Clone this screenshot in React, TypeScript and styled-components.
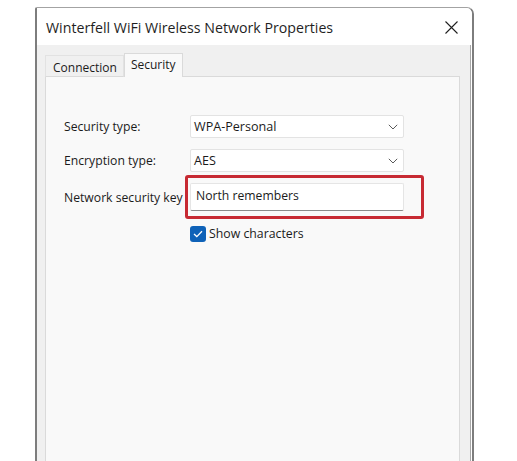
import React from "react";
import styled, { createGlobalStyle } from "styled-components";

const GlobalStyle = createGlobalStyle`
  html, body { margin: 0; padding: 0; background: #ffffff; }
  body { font-family: "Open Sans", "Noto Sans", sans-serif; color: #1b1b1b; }
`;

const Page = styled.div`
  width: 517px;
  height: 461px;
  overflow: hidden;
  padding: 7px 0 0 35px;
  box-sizing: border-box;
`;

const Window = styled.div`
  width: 439px;
  height: 470px;
  box-sizing: border-box;
  background: #ffffff;
  border-left: 2px solid #7d7d7d;
  border-right: 2px solid #7d7d7d;
  border-top: 1px solid #a3a3a3;
  border-top-right-radius: 7px;
  border-top-left-radius: 2px;
  display: flex;
  flex-direction: column;
`;

const TitleBar = styled.div`
  height: 37px;
  display: flex;
  align-items: center;
  justify-content: space-between;
  padding: 0 14px 0 9px;
  background: #ffffff;
  border-top-right-radius: 6px;
`;

const Title = styled.div`
  font-size: 14.2px;
  color: #1f1f1f;
  white-space: nowrap;
  margin-top: 1px;
`;

const CloseButton = styled.div`
  width: 14px;
  height: 14px;
  display: flex;
  align-items: center;
  justify-content: center;
  margin-top: 1px;
`;

const Body = styled.div`
  flex: 1;
  background: #f0f0f0;
  margin-right: 1px;
  border-right: 1px solid #a9a9a9;
  padding: 0 10px 0 8px;
  display: flex;
  flex-direction: column;
`;

const TabStrip = styled.div`
  display: flex;
  align-items: flex-end;
  height: 32px;
  margin-bottom: -1px;
  position: relative;
  z-index: 1;
`;

const Tab = styled.div<{ $active?: boolean }>`
  font-size: 12px;
  height: ${(p) => (p.$active ? 24 : 22)}px;
  box-sizing: border-box;
  display: flex;
  align-items: ${(p) => (p.$active ? "flex-start" : "center")};
  padding: ${(p) => (p.$active ? "2px 6px 0 6px" : "2px 6px 0 7px")};
  background: ${(p) => (p.$active ? "#f9f9f9" : "#f0f0f0")};
  border: 1px solid ${(p) => (p.$active ? "#dadada" : "#e2e2e2")};
  border-bottom: ${(p) => (p.$active ? "none" : "1px solid #dadada")};
  color: #1b1b1b;
`;

const Panel = styled.div`
  flex: 1;
  background: #f9f9f9;
  border: 1px solid #dadada;
  border-bottom: none;
  padding: 38px 0 0 18px;
`;

const Form = styled.div`
  display: grid;
  grid-template-columns: 126px 214px;
  row-gap: 11px;
  align-items: center;
`;

const Label = styled.div`
  font-size: 12.2px;
  color: #1b1b1b;
  white-space: nowrap;
`;

const Select = styled.div`
  height: 23px;
  box-sizing: border-box;
  background: #ffffff;
  border: 1px solid #e3e3e3;
  border-radius: 2px;
  display: flex;
  align-items: center;
  justify-content: space-between;
  padding: 0 5px 0 3px;
  font-size: 12.6px;
  color: #1b1b1b;
`;

const InputWrap = styled.div`
  position: relative;
`;

const Input = styled.div`
  height: 28px;
  box-sizing: border-box;
  background: #ffffff;
  border: 1px solid #e5e5e5;
  border-bottom: 1px solid #8a8a8a;
  border-radius: 2px;
  display: flex;
  align-items: center;
  padding: 0 0 4px 5px;
  font-size: 12.2px;
  color: #1b1b1b;
`;

const Highlight = styled.div`
  position: absolute;
  left: -5px;
  right: -20px;
  top: -8px;
  bottom: -8px;
  border: 3px solid #c72a33;
  border-radius: 3px;
  pointer-events: none;
`;

const CheckRow = styled.label`
  grid-column: 2;
  display: flex;
  align-items: center;
  gap: 3px;
  margin-top: 3px;
  font-size: 12.3px;
  color: #1b1b1b;
`;

const Checkbox = styled.div`
  width: 16px;
  height: 16px;
  border-radius: 3px;
  background: #0f62b8;
  display: flex;
  align-items: center;
  justify-content: center;
`;

const Chevron = () => (
  <svg width="10" height="6" viewBox="0 0 10 6">
    <path d="M0.8 0.8 L5 5 L9.2 0.8" fill="none" stroke="#5a5a5a" strokeWidth="1" />
  </svg>
);

export default function App() {
  return (
    <Page>
      <GlobalStyle />
      <Window>
        <TitleBar>
          <Title>Winterfell WiFi Wireless Network Properties</Title>
          <CloseButton>
            <svg width="13" height="13" viewBox="0 0 13 13">
              <path d="M0.5 0.5 L12.5 12.5 M12.5 0.5 L0.5 12.5" stroke="#1f1f1f" strokeWidth="1.1" />
            </svg>
          </CloseButton>
        </TitleBar>
        <Body>
          <TabStrip>
            <Tab>Connection</Tab>
            <Tab $active>Security</Tab>
          </TabStrip>
          <Panel>
            <Form>
              <Label>Security type:</Label>
              <Select>
                <span>WPA-Personal</span>
                <Chevron />
              </Select>
              <Label>Encryption type:</Label>
              <Select>
                <span>AES</span>
                <Chevron />
              </Select>
              <Label>Network security key</Label>
              <InputWrap>
                <Input>North remembers</Input>
                <Highlight />
              </InputWrap>
              <CheckRow>
                <Checkbox>
                  <svg width="10" height="8" viewBox="0 0 10 8">
                    <path d="M1 4 L3.8 6.6 L9 1.2" fill="none" stroke="#ffffff" strokeWidth="1.3" />
                  </svg>
                </Checkbox>
                Show characters
              </CheckRow>
            </Form>
          </Panel>
        </Body>
      </Window>
    </Page>
  );
}
